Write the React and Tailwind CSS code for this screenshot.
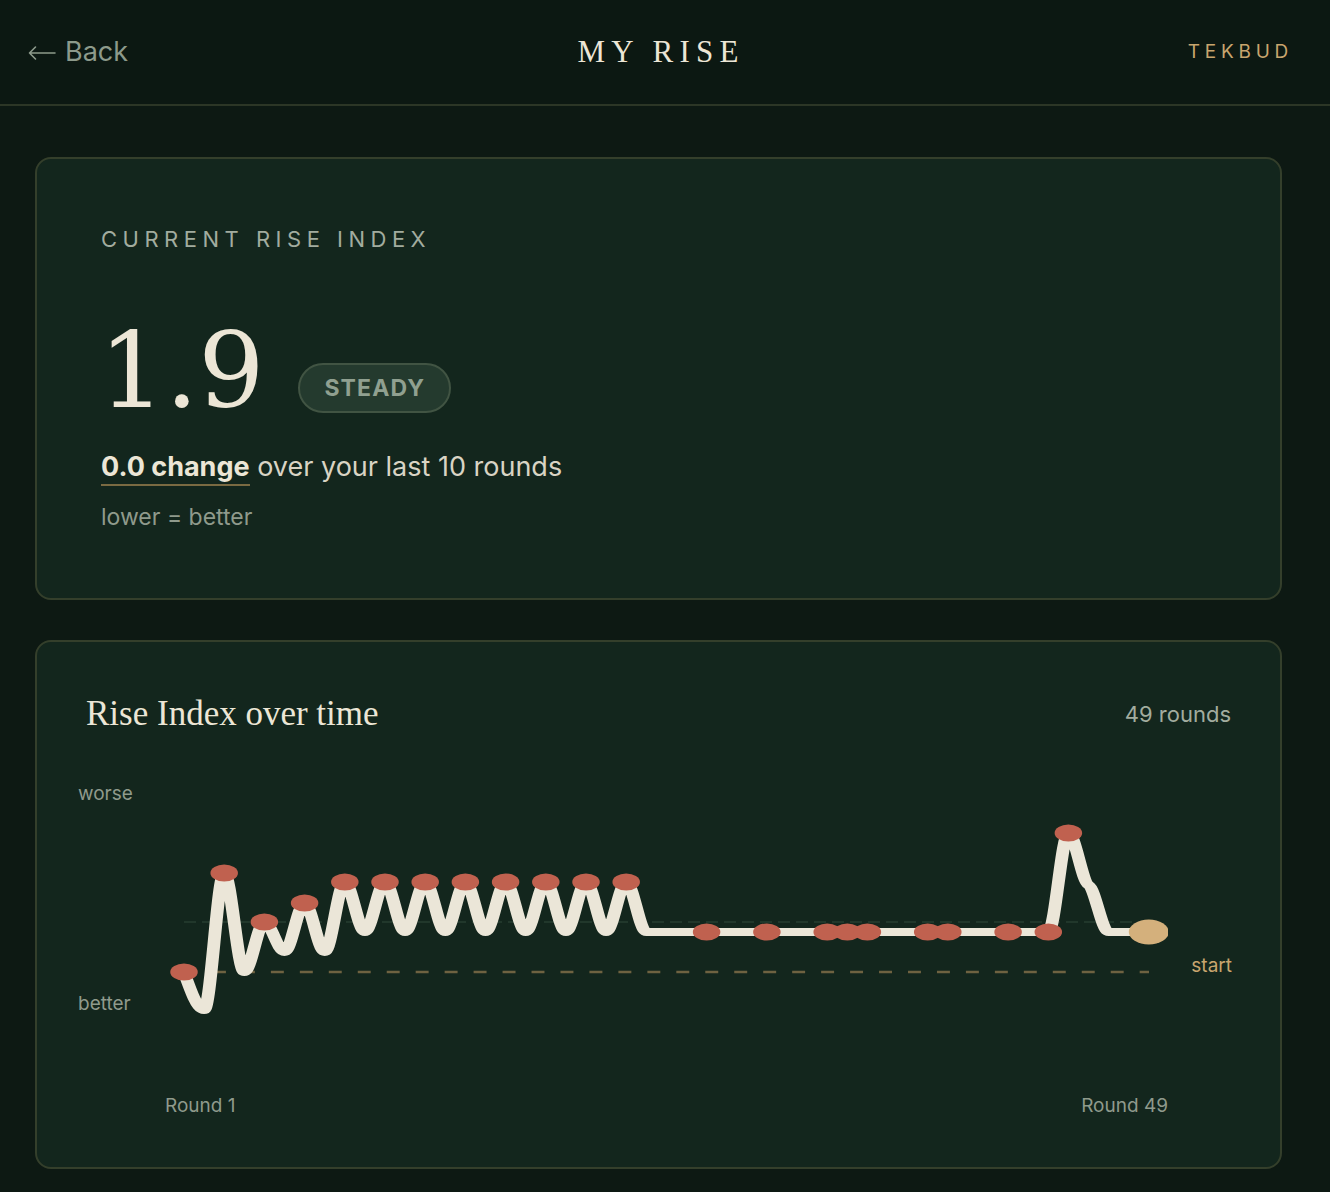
import React from 'react';

const SANS = "font-['Inter',sans-serif]";
const SERIF = "font-['Liberation_Serif',serif]";

// chart geometry: svg is drawn 1003 x 300 px, viewBox squeezed on x so dots read as ellipses
const W = 1003;
const H = 300;
const SX = 1.6;
const VW = W / SX;
const TOP = 770;

const values = [];
for (let i = 1; i <= 49; i++) {
  let y = 931;
  if (i === 1) y = 971;
  else if (i === 2) y = 1009;
  else if (i === 3) y = 872;
  else if (i === 4) y = 971;
  else if (i === 5) y = 921;
  else if (i === 6) y = 951;
  else if (i === 7) y = 902;
  else if (i === 8) y = 951;
  else if (i >= 9 && i <= 23 && i % 2 === 1) y = 881;
  else if (i === 45) y = 832;
  else if (i === 46) y = 884;
  values.push(y);
}

const DOTS = [1, 3, 5, 7, 9, 11, 13, 15, 17, 19, 21, 23, 27, 30, 33, 34, 35, 38, 39, 42, 44, 45];

const pts = values.map((y, i) => [(19 + i * 20.1) / SX, y - TOP]);

function monotonePath(p, overrides = {}) {
  const n = p.length;
  const t = new Array(n).fill(0);
  for (let i = 1; i < n - 1; i++) {
    const [x0, y0] = p[i - 1];
    const [x1, y1] = p[i];
    const [x2, y2] = p[i + 1];
    const h0 = x1 - x0;
    const h1 = x2 - x1;
    const s0 = (y1 - y0) / h0;
    const s1 = (y2 - y1) / h1;
    const q = (s0 * h1 + s1 * h0) / (h0 + h1);
    t[i] = (Math.sign(s0) + Math.sign(s1)) * Math.min(Math.abs(s0), Math.abs(s1), 0.5 * Math.abs(q)) || 0;
  }
  Object.keys(overrides).forEach((k) => { t[k] = overrides[k]; });
  t[0] = (3 * (p[1][1] - p[0][1]) / (p[1][0] - p[0][0]) - t[1]) / 2;
  t[n - 1] = (3 * (p[n - 1][1] - p[n - 2][1]) / (p[n - 1][0] - p[n - 2][0]) - t[n - 2]) / 2;
  let d = `M${p[0][0]},${p[0][1]}`;
  for (let i = 0; i < n - 1; i++) {
    const [x0, y0] = p[i];
    const [x1, y1] = p[i + 1];
    const dx = (x1 - x0) / 3;
    d += `C${x0 + dx},${y0 + dx * t[i]},${x1 - dx},${y1 - dx * t[i + 1]},${x1},${y1}`;
  }
  return d;
}

function RiseChart() {
  const x0 = 19 / SX;
  const x1 = 984 / SX;
  const last = pts[pts.length - 1];
  return (
    <svg width={W} height={H} viewBox={`0 0 ${VW} ${H}`} preserveAspectRatio="none" className="block">
      <line x1={x0} y1={151} x2={x1} y2={151} stroke="#21372b" strokeWidth="2" strokeDasharray="7.5 3.75" />
      <line x1={x0} y1={201} x2={x1} y2={201} stroke="#6e6241" strokeWidth="2.5" strokeDasharray="8.1 10" />
      <path d={monotonePath(pts, { 45: 0.9 })} fill="none" stroke="#ebe6d8" strokeWidth="8" strokeLinejoin="round" strokeLinecap="round" />
      {DOTS.map((r) => (
        <circle key={r} cx={pts[r - 1][0]} cy={pts[r - 1][1]} r="8.6" fill="#c0614f" />
      ))}
      <circle cx={last[0]} cy={last[1]} r="12.5" fill="#d4b07c" />
    </svg>
  );
}

export default function App() {
  return (
    <div className={`min-h-screen bg-[#0d1913] ${SANS}`}>
      {/* Header */}
      <header className="border-b-2 border-[#2c3626] bg-[#0c1812]">
        <div className="w-[1316px] h-[104px] grid grid-cols-3 items-center pl-7 pr-[23px]">
          <a className="text-[27px] text-[#8d9a8b] justify-self-start flex items-center gap-[9px]">
            <svg width="28" height="16" viewBox="0 0 28 16" fill="none" stroke="currentColor" strokeWidth="1.6" strokeLinecap="round" strokeLinejoin="round" className="mt-[1px]">
              <path d="M27 8H1.5M7.5 2L1.5 8l6 6" />
            </svg>
            <span>Back</span>
          </a>
          <h1 className={`${SERIF} text-[31px] tracking-[0.2em] text-[#ece6d6] justify-self-center pl-[1px]`}>MY RISE</h1>
          <span className="text-[19px] tracking-[0.25em] text-[#c8a56e] justify-self-end">TEKBUD</span>
        </div>
      </header>

      <main className="w-[1317px] pt-[51px] px-[35px] pb-6">
        {/* Current index */}
        <section className="rounded-2xl border-2 border-[#343f2b] bg-[#13261d] p-16">
          <p className="text-[22px] leading-[33px] tracking-[0.25em] text-[#a2ac9f]">CURRENT RISE INDEX</p>
          <div className="flex items-end mt-[58px]">
            <span className="font-['DejaVu_Serif',serif] text-[104px] leading-[114px] text-[#ece6d6] -ml-[2px]">1.9</span>
            <span className="ml-[34px] mb-[15px] h-[50px] px-[24px] flex items-center rounded-full border-2 border-[#415443] bg-[#243a2e] text-[23px] font-bold tracking-[0.05em] text-[#90a090]">
              STEADY
            </span>
          </div>
          <p className="mt-[19px] text-[27px] leading-[39px] text-[#d9d4c4]">
            <span className="font-bold text-[#ece6d6] border-b-2 border-[#7a6a42] pb-[1px]">0.0 change</span> over your last 10 rounds
          </p>
          <p className="mt-[15px] text-[23px] leading-[33px] text-[#8f9a8c]">lower = better</p>
        </section>

        {/* Chart */}
        <section className="mt-[40px] rounded-2xl border-2 border-[#343f2b] bg-[#13261d] pt-[51px] px-[49px] pb-[47px]">
          <div className="flex items-center justify-between">
            <h2 className={`${SERIF} text-[35px] leading-[42px] text-[#ece6d6]`}>Rise Index over time</h2>
            <span className="text-[22px] text-[#a2ac9f]">49 rounds</span>
          </div>

          <div className="-ml-2 mt-[36px] grid grid-cols-[87px_1003px_64px]">
            <div className="flex flex-col justify-between pt-[9px] pb-[53px] text-[19px] leading-[28px] text-[#8f9a8c]">
              <span>worse</span>
              <span>better</span>
            </div>
            <RiseChart />
            <div className="pt-[181px] text-right text-[19px] leading-[28px] text-[#c8a56e]">start</div>
          </div>

          <div className="-ml-2 mt-[21px] grid grid-cols-[87px_1003px_64px] text-[19px] leading-[28px] text-[#8f9a8c]">
            <span />
            <div className="flex justify-between">
              <span>Round 1</span>
              <span>Round 49</span>
            </div>
            <span />
          </div>
        </section>
      </main>
    </div>
  );
}
